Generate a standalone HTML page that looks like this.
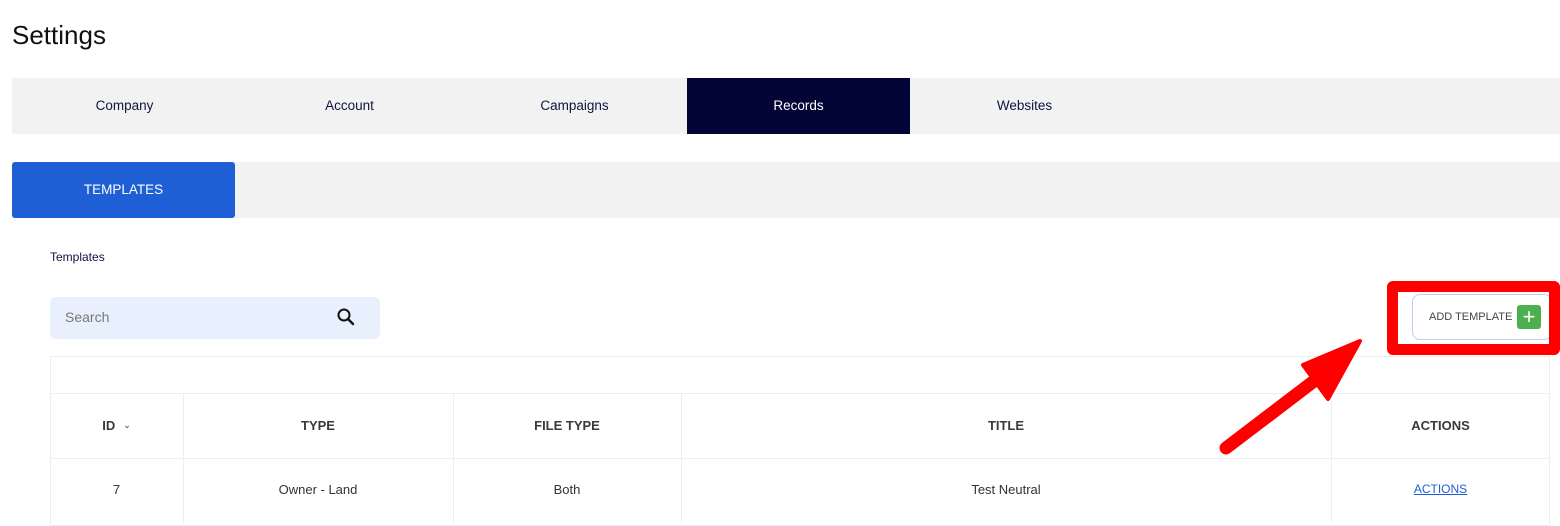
<!DOCTYPE html>
<html><head><style>
body{margin:0;width:1560px;height:518px;overflow:hidden;background:#fff;font-family:"Liberation Sans",sans-serif;position:relative}
.a{position:absolute}
.tab{position:absolute;top:78px;height:56px;line-height:56px;text-align:center;font-size:13.5px;color:#0e1440}
.c{position:absolute;display:flex;align-items:center;justify-content:center;font-size:13px;color:#333}
.h{font-weight:bold;color:#3a3a3a}
</style></head><body>
<div class="a" style="left:12px;top:20px;font-size:26px;color:#111">Settings</div>
<div class="a" style="left:12px;top:78px;width:1548px;height:56px;background:#f2f2f2"></div>
<div class="tab" style="left:12px;width:225px">Company</div>
<div class="tab" style="left:237px;width:225px">Account</div>
<div class="tab" style="left:462px;width:225px">Campaigns</div>
<div class="tab" style="left:687px;width:223px;background:#020535;color:#fff">Records</div>
<div class="tab" style="left:912px;width:225px">Websites</div>
<div class="a" style="left:12px;top:162px;width:1548px;height:56px;background:#f2f2f2"></div>
<div class="tab" style="left:12px;top:162px;width:223px;background:#1f5fd6;color:#fff;border-radius:3px">TEMPLATES</div>
<div class="a" style="left:50px;top:250px;font-size:12px;color:#0e1440">Templates</div>
<div class="a" style="left:50px;top:297px;width:330px;height:42px;background:#e8f0fd;border-radius:6px"></div>
<div class="a" style="left:65px;top:309px;font-size:14px;color:#777">Search</div>
<svg class="a" style="left:336px;top:307px" width="20" height="20" viewBox="0 0 20 20"><circle cx="8" cy="8" r="5.5" fill="none" stroke="#111" stroke-width="2"/><path d="M12 12l5 5" stroke="#111" stroke-width="2.4" stroke-linecap="round"/></svg>
<div class="a" style="left:50px;top:356px;width:1500px;height:170px;border:1px solid #eceef2;box-sizing:border-box"></div>
<div class="a" style="left:50px;top:393px;width:1500px;height:1px;background:#eceef2"></div>
<div class="a" style="left:50px;top:458px;width:1500px;height:1px;background:#eceef2"></div>
<div class="a" style="left:183px;top:393px;width:1px;height:130px;background:#eceef2"></div>
<div class="a" style="left:453px;top:393px;width:1px;height:130px;background:#eceef2"></div>
<div class="a" style="left:681px;top:393px;width:1px;height:130px;background:#eceef2"></div>
<div class="a" style="left:1331px;top:393px;width:1px;height:130px;background:#eceef2"></div>
<div class="c h" style="left:50px;top:393px;width:133px;height:65px">ID <span style="font-weight:normal;font-size:9px;margin-left:8px">&#8964;</span></div>
<div class="c h" style="left:183px;top:393px;width:270px;height:65px">TYPE</div>
<div class="c h" style="left:453px;top:393px;width:228px;height:65px">FILE TYPE</div>
<div class="c h" style="left:681px;top:393px;width:650px;height:65px">TITLE</div>
<div class="c h" style="left:1331px;top:393px;width:219px;height:65px">ACTIONS</div>
<div class="c" style="left:50px;top:459px;width:133px;height:60px">7</div>
<div class="c" style="left:183px;top:459px;width:270px;height:60px">Owner - Land</div>
<div class="c" style="left:453px;top:459px;width:228px;height:60px">Both</div>
<div class="c" style="left:681px;top:459px;width:650px;height:60px">Test Neutral</div>
<div class="c" style="left:1331px;top:459px;width:219px;height:60px;color:#1f5fd6;text-decoration:underline;font-size:12px">ACTIONS</div>
<div class="a" style="left:1412px;top:294px;width:140px;height:46px;border:1.5px solid #bcd0ee;border-radius:8px;box-sizing:border-box"></div>
<div class="a" style="left:1429px;top:311px;font-size:11px;color:#444">ADD TEMPLATE</div>
<div class="a" style="left:1517px;top:305px;width:24px;height:24px;background:#4caf50;border-radius:3px;color:#fff;font-size:22px;line-height:23px;text-align:center">+</div>
<div class="a" style="left:1387px;top:281px;width:173px;height:74px;border:11px solid #f00;border-radius:6px;box-sizing:border-box"></div>
<svg class="a" style="left:0;top:0" width="1560" height="518"><path d="M1226 448L1318 378" stroke="#f00" stroke-width="13" stroke-linecap="round"/><path d="M1360 341L1303 365L1328 399Z" fill="#f00" stroke="#f00" stroke-width="4" stroke-linejoin="round"/></svg>
</body></html>
